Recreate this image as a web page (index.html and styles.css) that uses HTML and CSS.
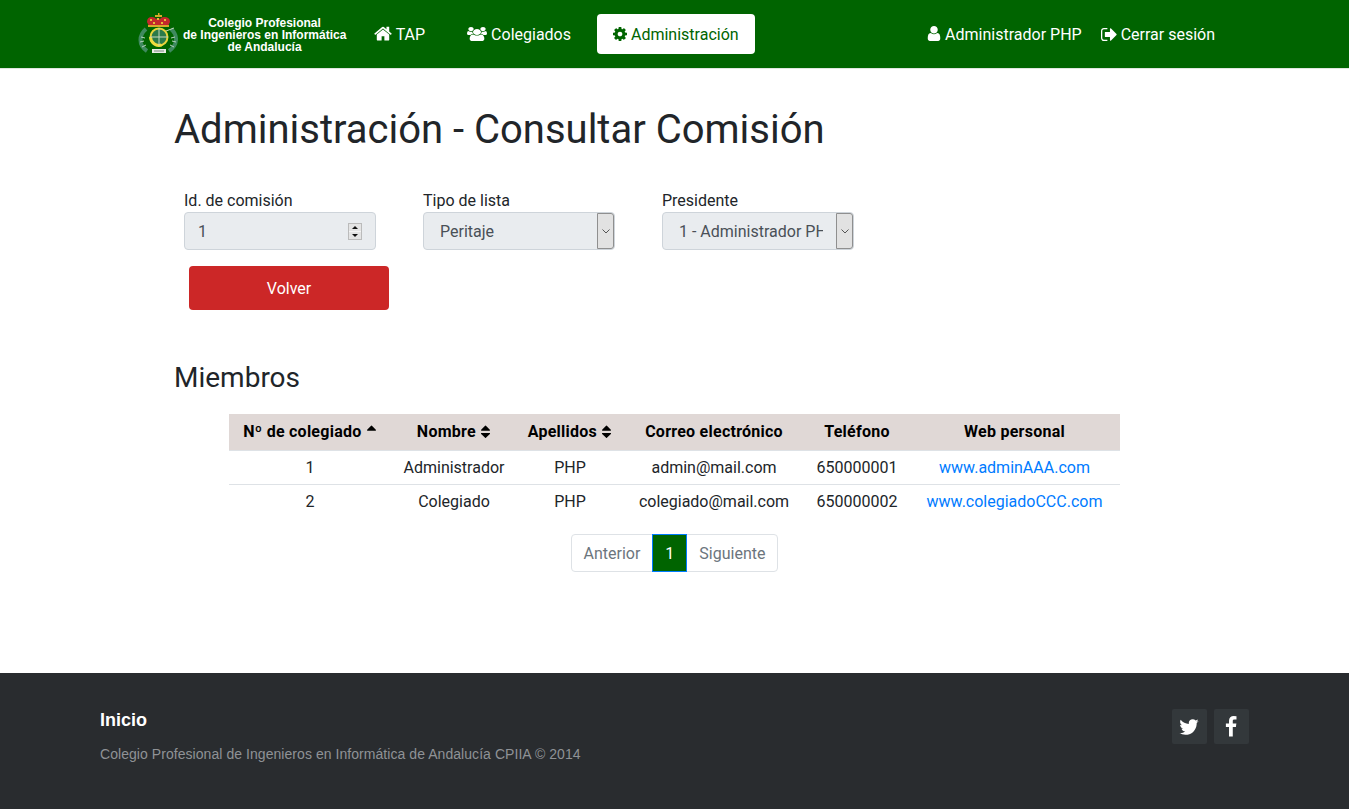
FILE: index.html
```html
<!DOCTYPE html>
<html lang="es">
<head>
    <meta charset="UTF-8">
    <title>Administración - Consultar Comisión</title>
    <link rel="stylesheet" href="styles.css">
</head>
<body>

    <!-- Navbar -->
    <nav class="navbar">
        <a class="brand" href="#">
            <svg class="brand-logo" viewBox="0 0 40 42">
                <!-- laurels -->
                <path d="M8 16C1 22 0 32 9 38" fill="none" stroke="#3f8a5f" stroke-width="4"/>
                <path d="M33 16C40 22 40 32 31 38" fill="none" stroke="#3f8a5f" stroke-width="4"/>
                <path d="M3 24l4 1M2 29l4-1M4 34l4-2M37 24l-4 1M38 29l-4-1M36 34l-4-2" stroke="#b7d2bf" stroke-width="1"/>
                <!-- crown -->
                <path d="M9 9q0-5 5-5 3 0 4 2 2-2 4 0 1-2 4-2 6 0 6 5l-2 4H11z" fill="#c4282c"/>
                <path d="M12 6h2v2h-2zM19 5h2v2h-2zM26 6h2v2h-2zM15 9h2v2h-2zM23 9h2v2h-2z" fill="#e6b93a"/>
                <path d="M10 12h21v2H10z" fill="#d9a92a"/>
                <path d="M17 2h7v2h-7zM20 0h1.500v3H20z" fill="#d9a92a"/>
                <!-- ring -->
                <circle cx="21" cy="24" r="8.500" fill="#2c7a49" stroke="#e8d33c" stroke-width="2"/>
                <path d="M12.500 24a8.500 8.500 0 0 0 11 8" fill="none" stroke="#f0dc3e" stroke-width="3"/>
                <path d="M21 15v18M12 24h18M28 18l8-3" stroke="#c4d6bd" stroke-width="1"/>
                <!-- plate -->
                <path d="M14 36h14v4H14z" fill="#e9ece6"/>
                <path d="M16 38h10" stroke="#7c8a80" stroke-width="1"/>
            </svg>
            <span class="brand-text">Colegio Profesional<br>de Ingenieros en Informática<br>de Andalucía</span>
        </a>
        <ul class="nav-links">
            <li><a class="nav-link" href="#">
                <svg class="icon icon-home" viewBox="64 192 1664 1344"><path d="M1472 992v480q0 26-19 45t-45 19h-384v-384h-256v384h-384q-26 0-45-19t-19-45v-480q0-1 .5-3t.5-3l575-474 575 474q1 2 1 6zm223-69l-62 74q-8 9-21 11h-3q-13 0-21-7l-692-577-692 577q-12 8-24 7-13-2-21-11l-62-74q-8-10-7-23.500t11-21.500l719-599q32-26 76-26t76 26l244 204v-195q0-14 9-23t23-9h192q14 0 23 9t9 23v408l219 182q10 8 11 21.500t-7 23.500z"/></svg>
                TAP</a></li>
            <li><a class="nav-link" href="#">
                <svg class="icon icon-wide" viewBox="0 0 1920 1792" preserveAspectRatio="none"><path d="M593 896q-162 5-265 128h-134q-82 0-138-40.500t-56-118.500q0-353 124-353 6 0 43.500 21t97.500 42.500 119 21.500q67 0 133-23-5 37-5 66 0 139 81 256zm1071 637q0 120-73 189.500t-194 69.500h-874q-121 0-194-69.500t-73-189.500q0-53 3.500-103.500t14-109 26.500-108.500 43-97.500 62-81 85.500-53.500 111.500-20q10 0 43 21.500t73 48 107 48 135 21.500 135-21.500 107-48 73-48 43-21.500q61 0 111.500 20t85.500 53.500 62 81 43 97.500 26.500 108.500 14 109 3.500 103.500zm-1024-1277q0 106-75 181t-181 75-181-75-75-181 75-181 181-75 181 75 75 181zm704 384q0 159-112.500 271.500t-271.500 112.500-271.500-112.500-112.500-271.500 112.500-271.500 271.500-112.500 271.500 112.500 112.500 271.500zm576 225q0 78-56 118.500t-138 40.500h-134q-103-123-265-128 81-117 81-256 0-29-5-66 66 23 133 23 59 0 119-21.500t97.500-42.500 43.500-21q124 0 124 353zm-128-609q0 106-75 181t-181 75-181-75-75-181 75-181 181-75 181 75 75 181z"/></svg>
                Colegiados</a></li>
            <li><a class="nav-link active" href="#">
                <svg class="icon icon-cog" viewBox="128 128 1536 1536"><path d="M1152 896q0-106-75-181t-181-75-181 75-75 181 75 181 181 75 181-75 75-181zm512-109v222q0 12-8 23t-20 13l-185 28q-19 54-39 91 35 50 107 138 10 12 10 25t-9 23q-27 37-99 108t-94 71q-12 0-26-9l-138-108q-44 23-91 38-16 136-29 186-7 28-36 28h-222q-14 0-24.500-8.500t-11.500-21.500l-28-184q-49-16-90-37l-141 107q-10 9-25 9-14 0-25-11-126-114-165-168-7-10-7-23 0-12 8-23 15-21 51-66.500t54-70.500q-27-50-41-99l-183-27q-13-2-21-12.500t-8-23.500v-222q0-12 8-23t19-13l186-28q14-46 39-92-40-57-107-138-10-12-10-24 0-10 9-23 26-36 98.500-107.500t94.500-71.500q13 0 26 10l138 107q44-23 91-38 16-136 29-186 7-28 36-28h222q14 0 24.500 8.500t11.500 21.500l28 184q49 16 90 37l142-107q9-9 24-9 13 0 25 10 129 119 165 170 7 8 7 22 0 12-8 23-15 21-51 66.500t-54 70.500q26 50 41 98l183 28q13 2 21 12.500t8 23.500z"/></svg>
                Administración</a></li>
        </ul>
        <ul class="nav-user">
            <li><a class="user-link" href="#">
                <svg class="icon icon-user" viewBox="256 128 1280 1536"><path d="M1536 1399q0 109-62.500 187t-150.500 78h-854q-88 0-150.500-78t-62.500-187q0-85 8.500-160.500t31.500-152 58.500-131 94-89 134.500-34.500q131 128 313 128t313-128q76 0 134.500 34.500t94 89 58.500 131 31.500 152 8.500 160.500zm-256-887q0 159-112.500 271.500t-271.500 112.500-271.500-112.500-112.500-271.500 112.500-271.500 271.500-112.500 271.500 112.500 112.500 271.500z"/></svg>
                Administrador PHP</a></li>
            <li><a class="user-link" href="#">
                <svg class="icon icon-exit" viewBox="64 256 1600 1280" preserveAspectRatio="none"><path d="M704 1440q0 4 1 20t.5 26.500-3 23.500-10 19.500-20.500 6.500h-320q-119 0-203.500-84.500t-84.500-203.500v-704q0-119 84.500-203.500t203.500-84.500h320q13 0 22.500 9.500t9.500 22.500q0 4 1 20t.5 26.500-3 23.500-10 19.500-20.500 6.500h-320q-66 0-113 47t-47 113v704q0 66 47 113t113 47h312l11.500 1 11.500 3 8 5.500 7 9 2 13.500zm928-544q0 26-19 45l-544 544q-19 19-45 19t-45-19-19-45v-288h-448q-26 0-45-19t-19-45v-384q0-26 19-45t45-19h448v-288q0-26 19-45t45-19 45 19l544 544q19 19 19 45z"/></svg>
                Cerrar sesión</a></li>
        </ul>
    </nav>

    <main class="content">
        <h1>Administración - Consultar Comisión</h1>

        <div class="form-row">
            <div class="form-group">
                <label>Id. de comisión</label>
                <div class="fake-input">
                    <span class="fake-value">1</span>
                    <span class="spinner"><i class="spin-up"></i><i class="spin-down"></i></span>
                </div>
            </div>
            <div class="form-group">
                <label>Tipo de lista</label>
                <div class="fake-input fake-select">
                    <span class="fake-value">Peritaje</span>
                    <span class="select-btn"><svg viewBox="0 0 8 5"><path d="M.5 .5L4 4 7.500 .5" fill="none" stroke="#555" stroke-width="1"/></svg></span>
                </div>
            </div>
            <div class="form-group">
                <label>Presidente</label>
                <div class="fake-input fake-select">
                    <span class="fake-value">1 - Administrador PHP</span>
                    <span class="select-btn"><svg viewBox="0 0 8 5"><path d="M.5 .5L4 4 7.500 .5" fill="none" stroke="#555" stroke-width="1"/></svg></span>
                </div>
            </div>
        </div>

        <button class="btn-back" type="button">Volver</button>

        <h2>Miembros</h2>

        <table class="members">
            <colgroup>
                <col class="col-num"><col class="col-name"><col class="col-last">
                <col class="col-mail"><col class="col-phone"><col class="col-web">
            </colgroup>
            <thead>
                <tr>
                    <th>Nº de colegiado <svg class="sort" viewBox="320 128 1152 1472"><path d="M1408 704q0 26-19 45t-45 19h-896q-26 0-45-19t-19-45 19-45l448-448q19-19 45-19t45 19l448 448q19 19 19 45z"/></svg></th>
                    <th>Nombre <svg class="sort" viewBox="320 128 1152 1472"><path d="M1408 1088q0 26-19 45l-448 448q-19 19-45 19t-45-19l-448-448q-19-19-19-45t19-45 45-19h896q26 0 45 19t19 45zm0-384q0 26-19 45t-45 19h-896q-26 0-45-19t-19-45 19-45l448-448q19-19 45-19t45 19l448 448q19 19 19 45z"/></svg></th>
                    <th>Apellidos <svg class="sort" viewBox="320 128 1152 1472"><path d="M1408 1088q0 26-19 45l-448 448q-19 19-45 19t-45-19l-448-448q-19-19-19-45t19-45 45-19h896q26 0 45 19t19 45zm0-384q0 26-19 45t-45 19h-896q-26 0-45-19t-19-45 19-45l448-448q19-19 45-19t45 19l448 448q19 19 19 45z"/></svg></th>
                    <th>Correo electrónico</th>
                    <th>Teléfono</th>
                    <th>Web personal</th>
                </tr>
            </thead>
            <tbody>
                <tr>
                    <td>1</td><td>Administrador</td><td>PHP</td><td>admin@mail.com</td><td>650000001</td>
                    <td><a href="#">www.adminAAA.com</a></td>
                </tr>
                <tr>
                    <td>2</td><td>Colegiado</td><td>PHP</td><td>colegiado@mail.com</td><td>650000002</td>
                    <td><a href="#">www.colegiadoCCC.com</a></td>
                </tr>
            </tbody>
        </table>

        <ul class="pagination">
            <li class="page-item first">Anterior</li>
            <li class="page-item current">1</li>
            <li class="page-item last">Siguiente</li>
        </ul>
    </main>

    <footer class="footer">
        <div>
            <p class="footer-title">Inicio</p>
            <p class="footer-copy">Colegio Profesional de Ingenieros en Informática de Andalucía CPIIA © 2014</p>
        </div>
        <div class="social">
            <a class="social-btn" href="#"><svg viewBox="0 0 1792 1792"><path d="M1684 408q-67 98-162 167 1 14 1 42 0 130-38 259.500t-115.500 248.500-184.500 210.500-258 146-323 54.500q-271 0-496-145 35 4 78 4 225 0 401-138-105-2-188-64.500t-114-159.500q33 5 61 5 43 0 85-11-112-23-185.500-111.500t-73.500-205.500v-4q68 38 146 41-66-44-105-115t-39-154q0-88 44-163 121 149 294.500 238.500t371.500 99.500q-8-38-8-74 0-134 94.500-228.500t228.500-94.500q140 0 236 102 109-21 205-78-37 115-142 178 92-10 184-50z"/></svg></a>
            <a class="social-btn" href="#"><svg viewBox="0 0 1792 1792"><path d="M1343 12v264h-157q-86 0-116 36t-30 108v189h293l-39 296h-254v759h-306v-759h-255v-296h255v-218q0-186 104-288.500t277-102.500q147 0 228 12z"/></svg></a>
        </div>
    </footer>

</body>
</html>
```

FILE: styles.css
```css
/* Global */
* {
    box-sizing: border-box;
}

body {
    margin: 0;
    font-family: Roboto, sans-serif;
    font-size: 16px;
    line-height: 24px;
    color: #212529;
    background: white;
}

a {
    text-decoration: none;
}

ul {
    list-style: none;
    margin: 0;
    padding: 0;
}

/* Navbar */
.navbar {
    display: flex;
    align-items: center;
    height: 69px;
    padding: 0 134px 1px 138px;
    background: #006400;
    border-bottom: 1px solid #dfe6df;
}

.brand {
    display: flex;
    align-items: center;
    color: white;
}

.brand-logo {
    width: 40px;
    height: 42px;
}

.brand-text {
    width: 169px;
    padding: 2px 1px 0 5px;
    font-family: "Liberation Sans", sans-serif;
    font-size: 12px;
    font-weight: bold;
    line-height: 12px;
    text-align: center;
    white-space: nowrap;
}

.nav-links {
    display: flex;
    gap: 10px;
    margin-left: 11px;
}

.nav-link {
    display: block;
    height: 40px;
    padding: 9px 16px 7px;
    border-radius: 4px;
    color: white;
    white-space: nowrap;
}

.nav-link.active {
    background: white;
    color: #006400;
}

.nav-user {
    display: flex;
    gap: 19px;
    margin-left: auto;
    padding-top: 2px;
}

.user-link {
    color: white;
    white-space: nowrap;
}

.icon {
    fill: currentColor;
    vertical-align: -1px;
}

.icon-home {
    width: 18px;
    height: 14.500px;
}

.icon-wide {
    width: 20px;
    height: 14px;
}

.icon-cog {
    width: 14px;
    height: 14px;
}

.icon-user {
    width: 14px;
    height: 15px;
}

.icon-exit {
    width: 16px;
    height: 13px;
}

/* Content */
.content {
    display: flex;
    flex-direction: column;
    height: 604px;
    padding: 37px 174px 0;
}

h1 {
    margin: 0 0 35px;
    font-size: 40px;
    font-weight: 400;
    line-height: 48px;
}

.form-row {
    display: flex;
    gap: 47px;
    margin-left: 10px;
}

.form-group {
    width: 192px;
}

label {
    display: block;
    height: 23px;
}

.fake-input {
    display: flex;
    align-items: center;
    width: 192px;
    height: 38px;
    padding: 0 13px;
    background: #e9ecef;
    border: 1px solid #ced4da;
    border-radius: 4px;
    color: #495057;
}

.fake-value {
    flex: 1;
    overflow: hidden;
    padding-top: 2px;
    white-space: nowrap;
}

.spinner {
    display: flex;
    flex-direction: column;
    width: 14px;
    height: 17px;
    background: #e4e4e4;
    border: 1px solid #bbb;
}

.spinner i {
    flex: 1;
    display: flex;
    align-items: center;
    justify-content: center;
}

.spin-up::after,
.spin-down::after {
    content: "";
    border-left: 3px solid transparent;
    border-right: 3px solid transparent;
}

.spin-up::after {
    border-bottom: 3px solid #111;
}

.spin-down {
    border-top: 1px solid #f4f4f4;
}

.spin-down::after {
    border-top: 3px solid #111;
}

.fake-select {
    padding: 0 0 0 16px;
}

.fake-select .fake-value {
    margin-right: 13px;
}

.select-btn {
    display: flex;
    align-items: center;
    justify-content: center;
    width: 17px;
    height: 36px;
    background: #e2e2e2;
    border: 1px solid #8f8f8f;
    border-radius: 0 3px 3px 0;
}

.select-btn svg {
    width: 8px;
    height: 5px;
}

.btn-back {
    width: 200px;
    height: 44px;
    margin: 16px 0 0 15px;
    background: #cc2727;
    border: none;
    border-radius: 4px;
    color: white;
    font-family: inherit;
    font-size: 16px;
}

h2 {
    margin: 50px 0 20px;
    padding-top: 1px;
    height: 34px;
    font-size: 28px;
    font-weight: 400;
    line-height: 34px;
}

/* Table */
.members {
    width: 891px;
    margin-left: 55px;
    border-collapse: collapse;
    table-layout: fixed;
    text-align: center;
}

.col-num { width: 162px; }
.col-name { width: 126px; }
.col-last { width: 106px; }
.col-mail { width: 182px; }
.col-phone { width: 104px; }
.col-web { width: 211px; }

.members th {
    height: 36px;
    padding: 0;
    background: #e0d8d6;
    color: black;
    font-weight: bold;
    letter-spacing: .25px;
    border-bottom: 1px solid #dee2e6;
}

.members td {
    height: 34px;
    padding: 2px 0 0;
    border-top: 1px solid #dee2e6;
}

.members thead + tbody tr:first-child td {
    border-top: none;
}

.members a {
    color: #007bff;
}

.sort {
    width: 11px;
    height: 13px;
    fill: black;
    vertical-align: -1px;
}

/* Pagination */
.pagination {
    display: flex;
    align-self: center;
    margin-top: 16px;
    margin-left: 1px;
}

.page-item {
    height: 38px;
    padding: 7px 12px 5px;
    border: 1px solid #dee2e6;
    margin-left: -1px;
    color: #6c757d;
}

.page-item.first {
    border-radius: 4px 0 0 4px;
}

.page-item.last {
    border-radius: 0 4px 4px 0;
}

.page-item.current {
    background: #006400;
    border-color: #007bff;
    color: white;
    position: relative;
}

/* Footer */
.footer {
    display: flex;
    justify-content: space-between;
    height: 136px;
    padding: 36px 100px 0;
    background: #292c2f;
    font-family: "Liberation Sans", sans-serif;
}

.footer p {
    margin: 0;
}

.footer-title {
    color: white;
    font-size: 18px;
    font-weight: bold;
    line-height: 22px;
}

.footer .footer-copy {
    margin-top: 11px;
    color: #8f9296;
    font-size: 14px;
    letter-spacing: .055px;
    line-height: 24px;
}

.social {
    display: flex;
    gap: 7px;
}

.social-btn {
    display: flex;
    align-items: center;
    justify-content: center;
    width: 35px;
    height: 35px;
    padding-right: 2px;
    background: #33383b;
    border-radius: 2px;
}

.social-btn svg {
    width: 22px;
    height: 22px;
    fill: white;
}
```
